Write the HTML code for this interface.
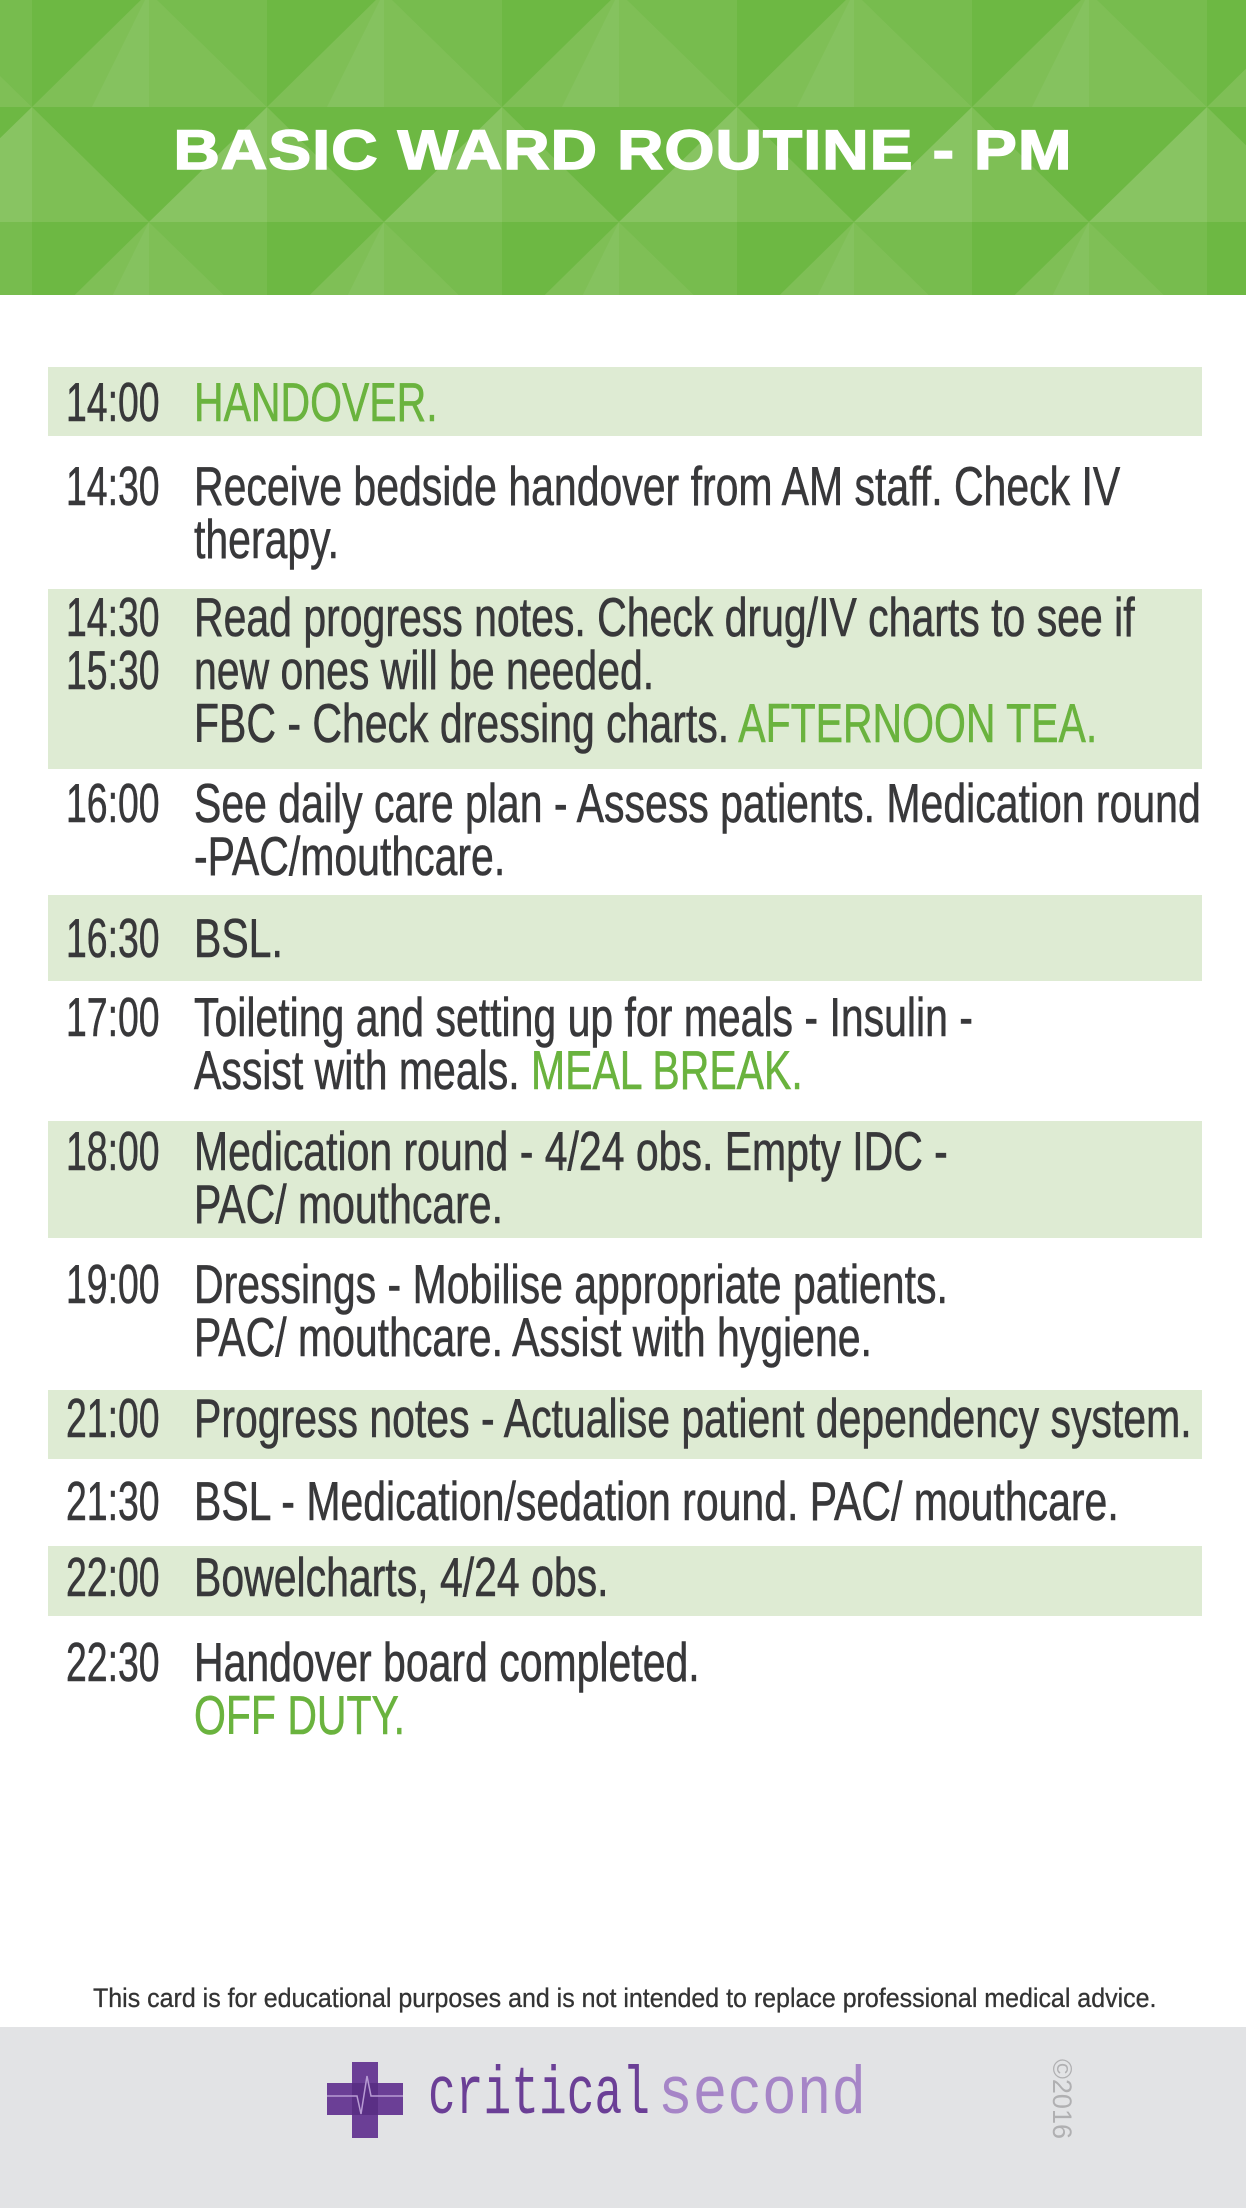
<!DOCTYPE html>
<html><head><meta charset="utf-8"><style>
*{margin:0;padding:0;box-sizing:border-box}
body{width:1246px;height:2208px;position:relative;background:#fff;overflow:hidden;font-family:"Liberation Sans",sans-serif;color:#38383a}
.bar{position:absolute;left:48px;width:1154px;background:#deebd3}
.t{position:absolute;left:66px;font-size:55px;line-height:53px;white-space:nowrap;transform:scaleX(0.68);transform-origin:0 0;-webkit-text-stroke:0.6px #38383a}
.d{position:absolute;left:194px;font-size:55px;line-height:53px;white-space:nowrap;transform:scaleX(0.745);transform-origin:0 0;-webkit-text-stroke:0.6px #38383a}
.g{color:#6ab33e;-webkit-text-stroke:0.6px #6ab33e}
</style></head><body>
<svg style="position:absolute;left:0;top:0" width="1246" height="295">
<defs><pattern id="p" width="235" height="230" patternUnits="userSpaceOnUse" x="32" y="-8">
<rect width="235" height="230" fill="#6db843"/>
<polygon points="0,115 117,0 235,115" fill="#7fbf56"/>
<polygon points="117,0 235,0 235,115" fill="#77bc4e"/>
<polygon points="0,115 117,230 0,230" fill="#7ebf55"/>
<polygon points="117,230 235,115 235,230" fill="#88c462"/>
<polygon points="60,115 117,0 117,115" fill="#85c25f"/>
</pattern></defs>
<rect width="1246" height="295" fill="url(#p)"/>
</svg>
<div style="position:absolute;left:0;width:1246px;top:118px;text-align:center;color:#fff;font-weight:bold;font-size:56px;line-height:64px;letter-spacing:1px;transform:scaleX(1.145);transform-origin:center;-webkit-text-stroke:1.5px #fff">BASIC WARD ROUTINE - PM</div>

<div class="bar" style="top:367px;height:69px"></div>
<div class="bar" style="top:589px;height:180px"></div>
<div class="bar" style="top:895px;height:86px"></div>
<div class="bar" style="top:1121px;height:117px"></div>
<div class="bar" style="top:1390px;height:69px"></div>
<div class="bar" style="top:1546px;height:70px"></div>

<div class="t" style="top:376px">14:00</div><div class="d g" style="top:376px">HANDOVER.</div>
<div class="t" style="top:460px">14:30</div><div class="d" style="top:460px">Receive bedside handover from AM staff. Check IV<br>therapy.</div>
<div class="t" style="top:591px">14:30<br>15:30</div><div class="d" style="top:591px">Read progress notes. Check drug/IV charts to see if<br>new ones will be needed.<br>FBC - Check dressing charts. <span class="g">AFTERNOON TEA.</span></div>
<div class="t" style="top:777px">16:00</div><div class="d" style="top:777px">See daily care plan - Assess patients. Medication round<br>-PAC/mouthcare.</div>
<div class="t" style="top:912px">16:30</div><div class="d" style="top:912px">BSL.</div>
<div class="t" style="top:991px">17:00</div><div class="d" style="top:991px">Toileting and setting up for meals - Insulin -<br>Assist with meals. <span class="g">MEAL BREAK.</span></div>
<div class="t" style="top:1125px">18:00</div><div class="d" style="top:1125px">Medication round - 4/24 obs. Empty IDC -<br>PAC/ mouthcare.</div>
<div class="t" style="top:1258px">19:00</div><div class="d" style="top:1258px">Dressings - Mobilise appropriate patients.<br>PAC/ mouthcare. Assist with hygiene.</div>
<div class="t" style="top:1392px">21:00</div><div class="d" style="top:1392px">Progress notes - Actualise patient dependency system.</div>
<div class="t" style="top:1475px">21:30</div><div class="d" style="top:1475px">BSL - Medication/sedation round. PAC/ mouthcare.</div>
<div class="t" style="top:1551px">22:00</div><div class="d" style="top:1551px">Bowelcharts, 4/24 obs.</div>
<div class="t" style="top:1636px">22:30</div><div class="d" style="top:1636px">Handover board completed.<br><span class="g">OFF DUTY.</span></div>

<div style="position:absolute;left:93px;top:1982px;font-size:27px;line-height:32px;white-space:nowrap;transform:scaleX(0.925);transform-origin:0 0;color:#333;-webkit-text-stroke:0.3px #333">This card is for educational purposes and is not intended to replace professional medical advice.</div>

<div style="position:absolute;left:0;top:2027px;width:1246px;height:181px;background:#e2e3e5"></div>
<div style="position:absolute;left:352px;top:2062px;width:26px;height:76px;background:#6b3f96"></div>
<div style="position:absolute;left:327px;top:2083px;width:76px;height:32px;background:#6b3f96"></div>
<svg style="position:absolute;left:327px;top:2062px" width="76" height="76"><polygon points="25,21 51,21 51,53 25,53" fill="#5a2f85"/><polyline points="0,34 30,34 34,52 40,14 44,34 76,34" fill="none" stroke="#b79bd3" stroke-width="1.5"/></svg>
<div style="position:absolute;left:428px;top:2063px;font-family:'Liberation Mono',monospace;font-size:68px;line-height:66px;white-space:nowrap;transform:scaleX(0.68);transform-origin:0 0;color:#6b3f96">critical</div>
<div style="position:absolute;left:658px;top:2063px;font-family:'Liberation Mono',monospace;font-size:68px;line-height:66px;white-space:nowrap;transform:scaleX(0.85);transform-origin:0 0;color:#a685c7">second</div>
<div style="position:absolute;left:1020px;top:2085px;font-size:27px;line-height:28px;color:#b0b0b2;transform:rotate(90deg);transform-origin:center;width:84px;text-align:center">©2016</div>
</body></html>
